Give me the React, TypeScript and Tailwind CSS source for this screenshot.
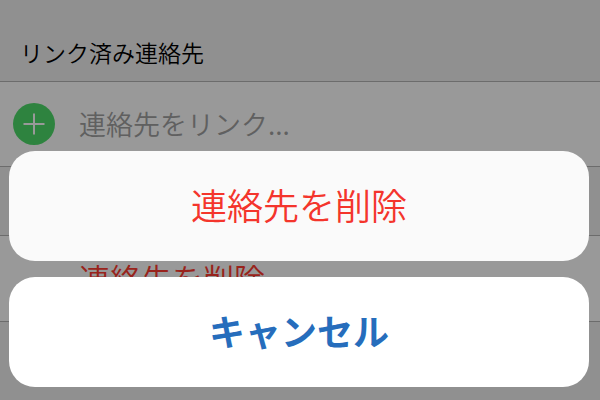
import { useState } from "react";

function PlusBadge() {
  return (
    <svg viewBox="0 0 42 42" className="h-[42px] w-[42px] shrink-0" aria-hidden="true">
      <circle cx="21" cy="21" r="21" fill="#4edb6a" />
      <path d="M21 10.5v21M10.5 21h21" stroke="#ffffff" strokeWidth="2" fill="none" />
    </svg>
  );
}

export default function App() {
  const [open, setOpen] = useState(true);

  return (
    <div
      lang="ja"
      className="relative min-h-screen overflow-hidden bg-[#f0f0f0] font-['Noto_Sans_CJK_JP',sans-serif] font-[350]"
    >
      <main>
        <h2 className="px-5 pt-9 pb-3 text-[23px] leading-[33px] text-black">リンク済み連絡先</h2>
        <button className="flex h-[86px] w-full items-center gap-6 border-y border-[#b4b4b4] bg-white px-[13px] text-left text-[27px] text-[#a0a0a0]">
          <PlusBadge />
          <span>連絡先をリンク...</span>
        </button>
        <button
          onClick={() => setOpen(true)}
          className="mt-[68px] flex h-[87px] w-full items-center border-y border-[#b4b4b4] bg-white pl-[79px] text-left text-[31px] text-[#ff3b30]"
        >
          連絡先を削除
        </button>
      </main>

      {open && (
        <div className="absolute inset-0 flex flex-col justify-end gap-4 bg-black/40 pr-[11px] pb-[13px] pl-[9px]">
          <button
            onClick={() => setOpen(false)}
            className="h-[110px] rounded-[26px] bg-[#fafafa] pb-1 text-[36px] text-[#f4352c]"
          >
            連絡先を削除
          </button>
          <button
            onClick={() => setOpen(false)}
            className="h-[110px] rounded-[26px] bg-white pb-1 text-[36px] font-bold text-[#266dbc]"
          >
            キャンセル
          </button>
        </div>
      )}
    </div>
  );
}
